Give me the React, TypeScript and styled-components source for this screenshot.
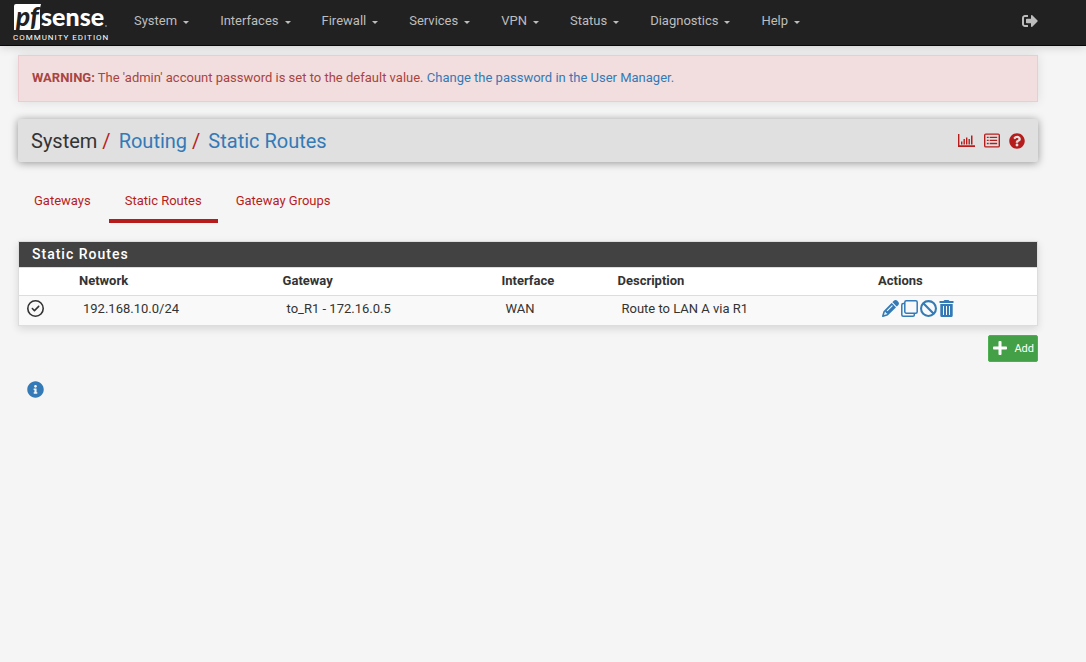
import React from "react";
import styled, { createGlobalStyle } from "styled-components";
import { FaSignOutAlt, FaQuestionCircle, FaInfoCircle, FaPlus } from "react-icons/fa";
import { FaRegCircleCheck, FaPencil, FaBan } from "react-icons/fa6";

const GlobalStyle = createGlobalStyle`
  *, *::before, *::after { box-sizing: border-box; }
  body {
    margin: 0;
    background: #f5f5f5;
    color: #333;
    font-family: Roboto, "Liberation Sans", sans-serif;
    font-size: 13px;
    line-height: 18px;
  }
  a { color: #337ab7; text-decoration: none; }
  svg { display: block; overflow: visible; }
`;

const Navbar = styled.header`
  display: flex;
  align-items: center;
  height: 46px;
  padding: 0 48px 4px 12px;
  background: #212121;
  border-bottom: 1px solid #080808;
  box-shadow: 0 0 10px rgba(0, 0, 0, 0.2);
`;

const Brand = styled.a`
  display: block;
  width: 96px;
  height: 40px;
  margin: 4px 26px 0 0;
`;

const Menu = styled.nav`
  display: flex;
  flex: 1;
  gap: 31px;
`;

const MenuButton = styled.button`
  display: flex;
  align-items: center;
  gap: 6px;
  padding: 0;
  border: 0;
  background: none;
  color: #bdbdbd;
  font: inherit;
  cursor: pointer;

  &::after {
    content: "";
    margin-top: 4px;
    border: 3px solid transparent;
    border-top-color: currentColor;
    border-bottom-width: 0;
  }
`;

const LogoutLink = styled.a`
  color: #bdbdbd;
  font-size: 16px;
`;

const Page = styled.main`
  padding: 9px 48px 24px 18px;
`;

const Alert = styled.div`
  margin-bottom: 17px;
  padding: 13px 13px 14px;
  background: #f2dede;
  border: 1px solid #ebccd1;
  color: #a94442;
  box-shadow: 0 0 10px rgba(0, 0, 0, 0.1);
`;

const TitleBar = styled.div`
  display: flex;
  align-items: center;
  justify-content: space-between;
  height: 43px;
  padding: 0 13px;
  background: #e0e0e0;
  border-radius: 2px;
  box-shadow: 0 1px 8px rgba(0, 0, 0, 0.4);
`;

const Breadcrumb = styled.h1`
  display: flex;
  margin: 0;
  font-size: 20px;
  line-height: 24px;
  font-weight: 400;
`;

const Slash = styled.span`
  margin: 0 8px 0 5px;
  color: #b71c1c;
`;

const TitleActions = styled.div`
  display: flex;
  align-items: center;
  gap: 9px;

  a { color: #b71c1c; font-size: 16px; }
`;

const Tabs = styled.nav`
  display: flex;
  gap: 2px;
  margin: 18px 0;
`;

const Tab = styled.a<{ $active?: boolean }>`
  height: 43px;
  padding: 12px 16px 0;
  border-bottom: 4px solid ${(p) => (p.$active ? "#b71c1c" : "transparent")};
  color: #b71c1c;
`;

const Panel = styled.section`
  background: #fff;
  border: 1px solid #ddd;
  box-shadow: 0 3px 8px rgba(0, 0, 0, 0.12);
`;

const PanelTitle = styled.h2`
  margin: 0;
  padding: 0 13px;
  background: #424242;
  color: #fff;
  font-size: 14px;
  line-height: 25px;
  font-weight: 500;
  letter-spacing: 1px;
`;

const RouteTable = styled.table`
  width: 100%;
  table-layout: fixed;
  border-collapse: collapse;

  th, td { padding: 4px; text-align: left; vertical-align: top; border-top: 1px solid #ddd; }
  th { height: 28px; font-weight: 700; }
  td { height: 29px; padding-left: 8px; background: #f9f9f9; }
`;

const Column = styled.col<{ $share: number }>`
  width: ${(p) => p.$share}%;
`;

const StatusIcon = styled.span`
  display: block;
  font-size: 17px;
`;

const RowActions = styled.div`
  display: flex;
  gap: 2px;

  a { font-size: 17px; }
`;

const ButtonRow = styled.div`
  display: flex;
  justify-content: flex-end;
  margin: 9px 0 19px;
`;

const AddButton = styled.button`
  display: flex;
  align-items: center;
  gap: 6px;
  height: 27px;
  padding: 0 3px;
  background: #43a047;
  border: 1px solid #4caf50;
  border-radius: 2px;
  color: #fff;
  font: 11px Roboto, sans-serif;
  cursor: pointer;

  svg { font-size: 16px; }
`;

const InfoButton = styled.button`
  margin-left: 9px;
  padding: 0;
  border: 0;
  background: none;
  color: #337ab7;
  font-size: 17px;
  cursor: pointer;
`;

const Logo = () => (
  <svg width="96" height="40" viewBox="0 0 96 40" role="img" aria-label="pfSense Community Edition">
    <path d="M4 1h25l-1 4v20q0 2-2 2H2V3q0-2 2-2z" fill="#fff" />
    <text x="4" y="23" fontFamily="Lato, sans-serif" fontSize="26" fontWeight="900" fontStyle="italic" fill="#212121">pf</text>
    <text x="29" y="23" fontFamily="Lato, sans-serif" fontSize="25" fontWeight="900" fill="#fff">sense</text>
    <circle cx="94" cy="23" r="0.8" fill="#bbb" />
    <text x="1" y="37" fontFamily="Roboto, sans-serif" fontSize="8" letterSpacing="1" fill="#fff">COMMUNITY EDITION</text>
  </svg>
);

const ChartIcon = () => (
  <svg width="17" height="15" viewBox="0 0 17 15" fill="currentColor">
    <path d="M0 1h1.400v11.300H17V14H0zM3 8.500h1.400v3H3zM5.500 6h1.400v5.500H5.500zM8 4.500h1.400v7H8zM10.500 6h1.400v5.500h-1.400zM13 2.500h1.500v9H13z" />
  </svg>
);

const ListIcon = () => (
  <svg width="16" height="15" viewBox="0 0 17 15" fill="currentColor">
    <path
      fillRule="evenodd"
      d="M2 0h13q2 0 2 2v11q0 2-2 2H2q-2 0-2-2V2q0-2 2-2zm-.5 1.500v12h14v-12zM3 3.500h2v1.400H3zm3 0h8v1.400H6zM3 6.700h2v1.400H3zm3 0h8v1.400H6zM3 10h2v1.400H3zm3 0h8v1.400H6z"
    />
  </svg>
);

const CopyIcon = () => (
  <svg width="17" height="17" viewBox="0 0 17 17" fill="none" stroke="currentColor" strokeWidth="1.500">
    <rect x="3.800" y="0.800" width="12.400" height="12.400" rx="1.500" />
    <path d="M3.800 3.500H2.200Q.8 3.500.8 5v9.700q0 1.500 1.400 1.500H12q1.300 0 1.300-1.300v-1.700" />
  </svg>
);

const TrashIcon = () => (
  <svg width="15" height="17" viewBox="0 0 15 17" fill="currentColor">
    <path
      fillRule="evenodd"
      d="M4.500 1l1-1h4l1 1H14.500v2H.500V1zM1.300 4h12.400v11.500q0 1.500-1.500 1.500H2.800q-1.500 0-1.500-1.500zM4 6v9h1V6zm3 0v9h1V6zm3 0v9h1V6z"
    />
  </svg>
);

const menuItems = ["System", "Interfaces", "Firewall", "Services", "VPN", "Status", "Diagnostics", "Help"];

const columnShares = [5.5, 20, 21.5, 11.4, 25.6, 16];

const routes = [
  { network: "192.168.10.0/24", gateway: "to_R1 - 172.16.0.5", iface: "WAN", description: "Route to LAN A via R1" },
];

export default function App() {
  return (
    <>
      <GlobalStyle />
      <Navbar>
        <Brand href="#"><Logo /></Brand>
        <Menu aria-label="Main">
          {menuItems.map((item) => <MenuButton key={item} type="button">{item}</MenuButton>)}
        </Menu>
        <LogoutLink href="#" aria-label="Log out"><FaSignOutAlt /></LogoutLink>
      </Navbar>
      <Page>
        <Alert role="alert">
          <strong>WARNING:</strong> The 'admin' account password is set to the default value.{" "}
          <a href="#">Change the password in the User Manager.</a>
        </Alert>
        <TitleBar>
          <Breadcrumb>
            System<Slash>/</Slash>
            <a href="#">Routing</a><Slash>/</Slash>
            <a href="#">Static Routes</a>
          </Breadcrumb>
          <TitleActions>
            <a href="#" aria-label="Monitoring"><ChartIcon /></a>
            <a href="#" aria-label="Logs"><ListIcon /></a>
            <a href="#" aria-label="Help"><FaQuestionCircle /></a>
          </TitleActions>
        </TitleBar>
        <Tabs aria-label="Routing">
          <Tab href="#">Gateways</Tab>
          <Tab href="#" $active aria-current="page">Static Routes</Tab>
          <Tab href="#">Gateway Groups</Tab>
        </Tabs>
        <Panel>
          <PanelTitle>Static Routes</PanelTitle>
          <RouteTable>
            <colgroup>
              {columnShares.map((share, i) => <Column key={i} $share={share} />)}
            </colgroup>
            <thead>
              <tr>
                <th aria-label="Status" />
                <th>Network</th>
                <th>Gateway</th>
                <th>Interface</th>
                <th>Description</th>
                <th>Actions</th>
              </tr>
            </thead>
            <tbody>
              {routes.map((route) => (
                <tr key={route.network}>
                  <td><StatusIcon><FaRegCircleCheck /></StatusIcon></td>
                  <td>{route.network}</td>
                  <td>{route.gateway}</td>
                  <td>{route.iface}</td>
                  <td>{route.description}</td>
                  <td>
                    <RowActions>
                      <a href="#" aria-label="Edit route"><FaPencil /></a>
                      <a href="#" aria-label="Copy route"><CopyIcon /></a>
                      <a href="#" aria-label="Disable route"><FaBan /></a>
                      <a href="#" aria-label="Delete route"><TrashIcon /></a>
                    </RowActions>
                  </td>
                </tr>
              ))}
            </tbody>
          </RouteTable>
        </Panel>
        <ButtonRow>
          <AddButton type="button"><FaPlus />Add</AddButton>
        </ButtonRow>
        <InfoButton type="button" aria-label="Show information"><FaInfoCircle /></InfoButton>
      </Page>
    </>
  );
}
